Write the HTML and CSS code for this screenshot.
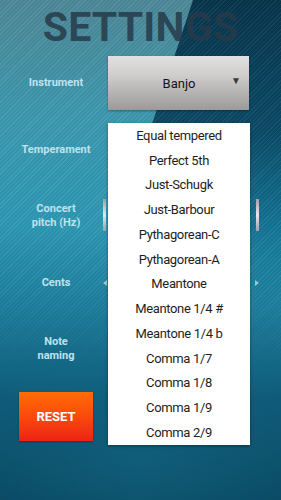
FILE: index.html
```html
<!DOCTYPE html>
<html>
<head>
<meta charset="utf-8">
<link rel="stylesheet" href="styles.css">
</head>
<body>
<div class="screen">
  <div class="dark-wedge"></div>
  <div class="stripes"></div>
  <div class="content">
    <h1 class="title">SETTINGS</h1>
    <div class="rows">
      <div class="label">Instrument</div>
      <div class="cell">
        <div class="spinner"><span class="spinner-text">Banjo</span><span class="caret">▼</span></div>
      </div>
      <div class="label">Temperament</div>
      <div class="cell"></div>
      <div class="label">Concert<br>pitch (Hz)</div>
      <div class="cell slider-cell">
        <div class="thumb"></div>
        <div class="thumb"></div>
      </div>
      <div class="label">Cents</div>
      <div class="cell slider-cell">
        <div class="arrow left"></div>
        <div class="arrow right"></div>
      </div>
      <div class="label">Note<br>naming</div>
      <div class="cell"></div>
      <div class="label"><button class="reset">RESET</button></div>
      <div class="cell"></div>
    </div>
  </div>
  <ul class="dropdown">
    <li>Equal tempered</li>
    <li>Perfect 5th</li>
    <li>Just-Schugk</li>
    <li>Just-Barbour</li>
    <li>Pythagorean-C</li>
    <li>Pythagorean-A</li>
    <li>Meantone</li>
    <li>Meantone 1/4 #</li>
    <li>Meantone 1/4 b</li>
    <li>Comma 1/7</li>
    <li>Comma 1/8</li>
    <li>Comma 1/9</li>
    <li>Comma 2/9</li>
  </ul>
</div>
</body>
</html>
```

FILE: styles.css
```css
html, body {
  margin: 0;
  padding: 0;
}
body {
  width: 281px;
  height: 500px;
  overflow: hidden;
  font-family: Roboto, "Liberation Sans", sans-serif;
}
.screen {
  position: relative;
  width: 281px;
  height: 500px;
  overflow: hidden;
  background:
    radial-gradient(ellipse 180px 120px at 140px 460px, rgba(20, 110, 140, 0.45), rgba(20, 110, 140, 0) 100%),
    linear-gradient(180deg, #4f8a99 0%, #3c9bb2 25%, #2e9ab6 45%, #1d7e9c 62%, #0e5a78 80%, #0a4862 100%);
}
.dark-wedge {
  position: absolute;
  inset: 0;
  background: linear-gradient(180deg, #08364d 0%, #0b4a66 25%, #137595 45%, rgba(20, 120, 150, 0) 62%);
  clip-path: polygon(193px 0, 281px 0, 281px 330px, 130px 190px, 150px 130px);
}
.stripes {
  position: absolute;
  inset: 0;
  background: repeating-linear-gradient(135deg, rgba(255, 255, 255, 0.05) 0 1px, rgba(0, 0, 0, 0.04) 1px 3px);
  -webkit-mask-image: linear-gradient(180deg, #000 0%, #000 55%, transparent 75%);
  mask-image: linear-gradient(180deg, #000 0%, #000 55%, transparent 75%);
}
.content {
  position: relative;
}
.title {
  margin: 0;
  height: 50px;
  font-size: 41px;
  line-height: 54px;
  font-weight: 700;
  text-align: center;
  color: rgba(38, 58, 72, 0.85);
  letter-spacing: 0.2px;
}
.rows {
  display: grid;
  grid-template-columns: 108px 147px;
  grid-auto-rows: 66.5px;
}
.label {
  display: flex;
  align-items: center;
  justify-content: center;
  text-align: center;
  font-size: 11px;
  font-weight: 700;
  line-height: 14px;
  color: #bfe2ee;
  padding-left: 4px;
}
.cell {
  display: flex;
  align-items: center;
}
.spinner {
  width: 141px;
  height: 54px;
  box-sizing: border-box;
  display: flex;
  align-items: center;
  justify-content: center;
  position: relative;
  background: linear-gradient(180deg, #e2e1e1 0%, #cfcecd 35%, #b3b2b1 70%, #9c9a99 100%);
  box-shadow: 0 1px 2px rgba(0, 0, 0, 0.35);
  color: #141414;
  font-size: 13px;
}
.spinner-text {
  margin-left: 1px;
}
.caret {
  position: absolute;
  right: 8px;
  top: 19px;
  font-size: 10px;
  color: #3a3a3a;
}
.slider-cell {
  justify-content: space-between;
  margin-left: -5px;
  width: 156px;
}
.thumb {
  width: 3px;
  height: 32px;
  background: linear-gradient(180deg, #9aa3a6, #e6e6e6 50%, #9aa3a6);
  margin-top: -2px;
}
.arrow {
  width: 0;
  height: 0;
  border-top: 3px solid transparent;
  border-bottom: 3px solid transparent;
}
.arrow.left {
  border-right: 4px solid rgba(210, 225, 230, 0.7);
}
.arrow.right {
  border-left: 4px solid rgba(210, 225, 230, 0.7);
}
.reset {
  width: 74px;
  height: 49px;
  margin-top: 1px;
  border: none;
  padding: 0;
  background: linear-gradient(180deg, #ff6c05 0%, #fb4a0c 50%, #ec2414 100%);
  color: #ffffff;
  font-family: Roboto, "Liberation Sans", sans-serif;
  font-size: 13px;
  font-weight: 700;
  box-shadow: 0 1px 2px rgba(0, 0, 0, 0.3);
}
.dropdown {
  position: absolute;
  left: 108px;
  top: 123px;
  width: 142px;
  margin: 0;
  padding: 0;
  list-style: none;
  background: #ffffff;
  box-shadow: 0 1px 3px rgba(0, 0, 0, 0.4);
}
.dropdown li {
  height: 24.75px;
  display: flex;
  align-items: center;
  justify-content: center;
  font-size: 13px;
  letter-spacing: -0.35px;
  color: #1e1e1e;
}
```
